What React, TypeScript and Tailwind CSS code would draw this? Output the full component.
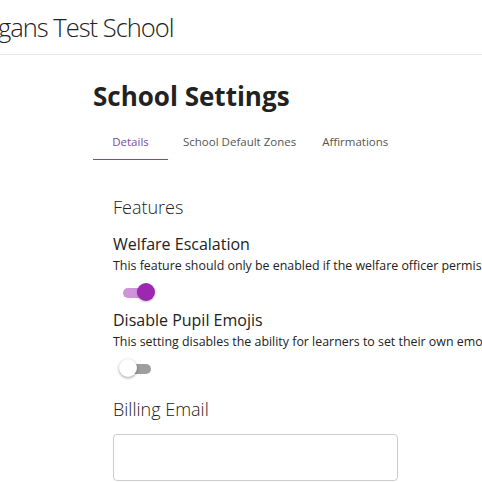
import React from "react";

const font = { fontFamily: '"Open Sans", "Noto Sans", sans-serif' };

function Toggle({ on }: { on: boolean }) {
  return (
    <div className="relative h-[20px] w-[36px] ml-[8px]">
      <div
        className={
          "absolute left-[2px] top-[5px] h-[10px] w-[28px] rounded-full " +
          (on ? "bg-[#ce93d8]" : "bg-[#9e9e9e]")
        }
      />
      <div
        className={
          "absolute top-0 h-[18px] w-[18px] rounded-full " +
          (on
            ? "left-[16px] bg-[#9c27b0] shadow-[0_1px_2px_rgba(0,0,0,0.25)]"
            : "left-[-2px] bg-white shadow-[0_1px_3px_rgba(0,0,0,0.4)]")
        }
      />
    </div>
  );
}

function Feature({ title, desc, on }: { title: string; desc: string; on: boolean }) {
  return (
    <div className="flex flex-col">
      <div className="text-[16px] leading-[22px] text-[#222]">{title}</div>
      <div className="mt-[1px] text-[12.4px] leading-[20px] text-[#222] whitespace-nowrap">{desc}</div>
      <div className="mt-[7px]">
        <Toggle on={on} />
      </div>
    </div>
  );
}

export default function App() {
  return (
    <div className="w-[482px] h-[482px] overflow-hidden bg-white" style={font}>
      <header className="h-[55px] border-b border-[#e8e8e8] flex items-center overflow-hidden">
        <span className="ml-[-2px] mt-[2px] text-[25.5px] tracking-[-1px] font-light text-[#222] whitespace-nowrap leading-none">
          gans Test School
        </span>
      </header>
      <main className="pl-[93px] pt-[23px]">
        <h1 className="text-[26px] font-bold text-[#222] leading-[36px]">School Settings</h1>
        <nav className="mt-[19px] flex text-[11.5px] text-[#555]">
          <div className="w-[75px] flex justify-center pb-[9px] border-b border-[#7b4a9e] text-[#7b4a9e]">
            Details
          </div>
          <div className="ml-[15px] pb-[9px]">School Default Zones</div>
          <div className="ml-[26px] pb-[9px]">Affirmations</div>
        </nav>
        <section className="pl-[20px] pt-[34px] flex flex-col">
          <h2 className="text-[18px] font-light text-[#222] leading-[26px]">Features</h2>
          <div className="mt-[13px] flex flex-col gap-[6px]">
            <Feature
              title="Welfare Escalation"
              desc="This feature should only be enabled if the welfare officer permission is granted"
              on
            />
            <Feature
              title="Disable Pupil Emojis"
              desc="This setting disables the ability for learners to set their own emoji"
              on={false}
            />
          </div>
          <h2 className="mt-[17px] text-[18px] font-light text-[#222] leading-[26px]">Billing Email</h2>
          <input className="mt-[12px] w-[285px] h-[47px] border border-[#ccc] rounded-[4px] outline-none" />
        </section>
      </main>
    </div>
  );
}
